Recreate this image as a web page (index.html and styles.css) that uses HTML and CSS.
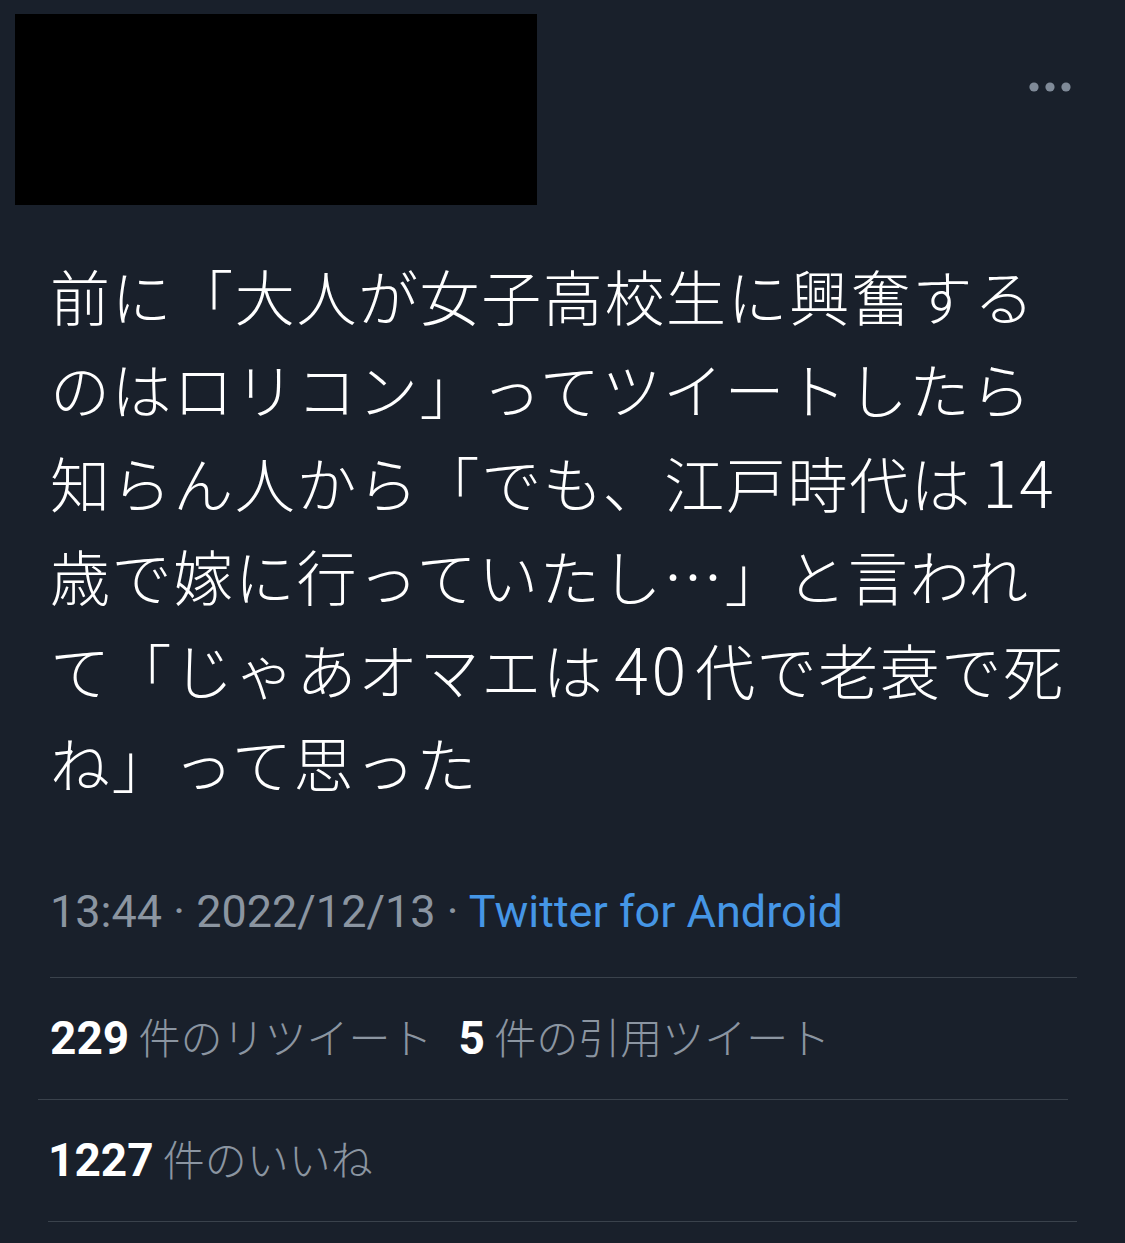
FILE: index.html
```html
<!DOCTYPE html>
<html lang="ja">
<head>
  <meta charset="UTF-8">
  <title>ツイート</title>
  <link rel="stylesheet" href="styles.css">
</head>
<body>
  <div class="tweet">
    <div class="tweet-head">
      <div class="author-hidden"></div>
      <svg class="more" width="44" height="12" viewBox="0 0 44 12">
        <circle cx="6" cy="6" r="4.6"/>
        <circle cx="22" cy="6" r="4.6"/>
        <circle cx="38" cy="6" r="4.6"/>
      </svg>
    </div>

    <div class="tweet-text">前に「大人が女子高校生に興奮する<br>のはロリコン」ってツイートしたら<br>知らん人から「でも、江戸時代は<span class="num">14</span><br>歳で嫁に行っていたし…」と言われ<br>て「じゃあオマエは<span class="num">40</span>代で老衰で死<br>ね」って思った</div>

    <div class="meta">13:44 · 2022/12/13 · <a class="source" href="#">Twitter for Android</a></div>

    <div class="stat-row first">
      <span class="stat"><b>229</b> 件のリツイート</span>
      <span class="stat"><b>5</b> 件の引用ツイート</span>
    </div>
    <div class="stat-row second">
      <span class="stat"><b>1227</b> 件のいいね</span>
    </div>
  </div>
</body>
</html>
```

FILE: styles.css
```css
body {
  margin: 0;
  background: #19202b;
  color: #fff;
  font-family: "Noto Sans CJK JP", sans-serif;
}

.tweet {
  width: 1125px;
  height: 1243px;
  overflow: hidden;
}

.tweet-head {
  display: flex;
  justify-content: space-between;
  align-items: flex-start;
  padding: 14px 0 0 15px;
}

.author-hidden {
  width: 522px;
  height: 191px;
  background: #000;
}

.more {
  fill: #7f8a98;
  margin: 67px 53px 0 0;
}

.tweet-text {
  margin: 43px 0 0 50px;
  font-size: 60px;
  font-weight: 300;
  letter-spacing: 1.6px;
  line-height: 93px;
  white-space: nowrap;
}

.tweet-text .num {
  margin: 0 6px 0 10px;
  letter-spacing: 3px;
  font-size: 64px;
}

.meta {
  margin: 76px 48px 0 50px;
  height: 56px;
  line-height: 56px;
  font-family: Roboto, "Noto Sans CJK JP", sans-serif;
  font-size: 45px;
  color: #8b95a1;
  padding-bottom: 37px;
  border-bottom: 1px solid #3a424c;
}

.source {
  color: #4596e6;
  text-decoration: none;
}

.stat-row {
  display: flex;
  align-items: center;
  gap: 26px;
  height: 115px;
  padding-bottom: 6px;
  border-bottom: 1px solid #3a424c;
  font-size: 42px;
  font-weight: 300;
  color: #8b95a1;
}

.stat-row.first {
  margin: 0 57px 0 38px;
  padding-left: 12px;
}

.stat-row.second {
  margin: 0 48px;
}

.stat b {
  font-family: Roboto, sans-serif;
  font-weight: 700;
  font-size: 46px;
  color: #fff;
}
```
